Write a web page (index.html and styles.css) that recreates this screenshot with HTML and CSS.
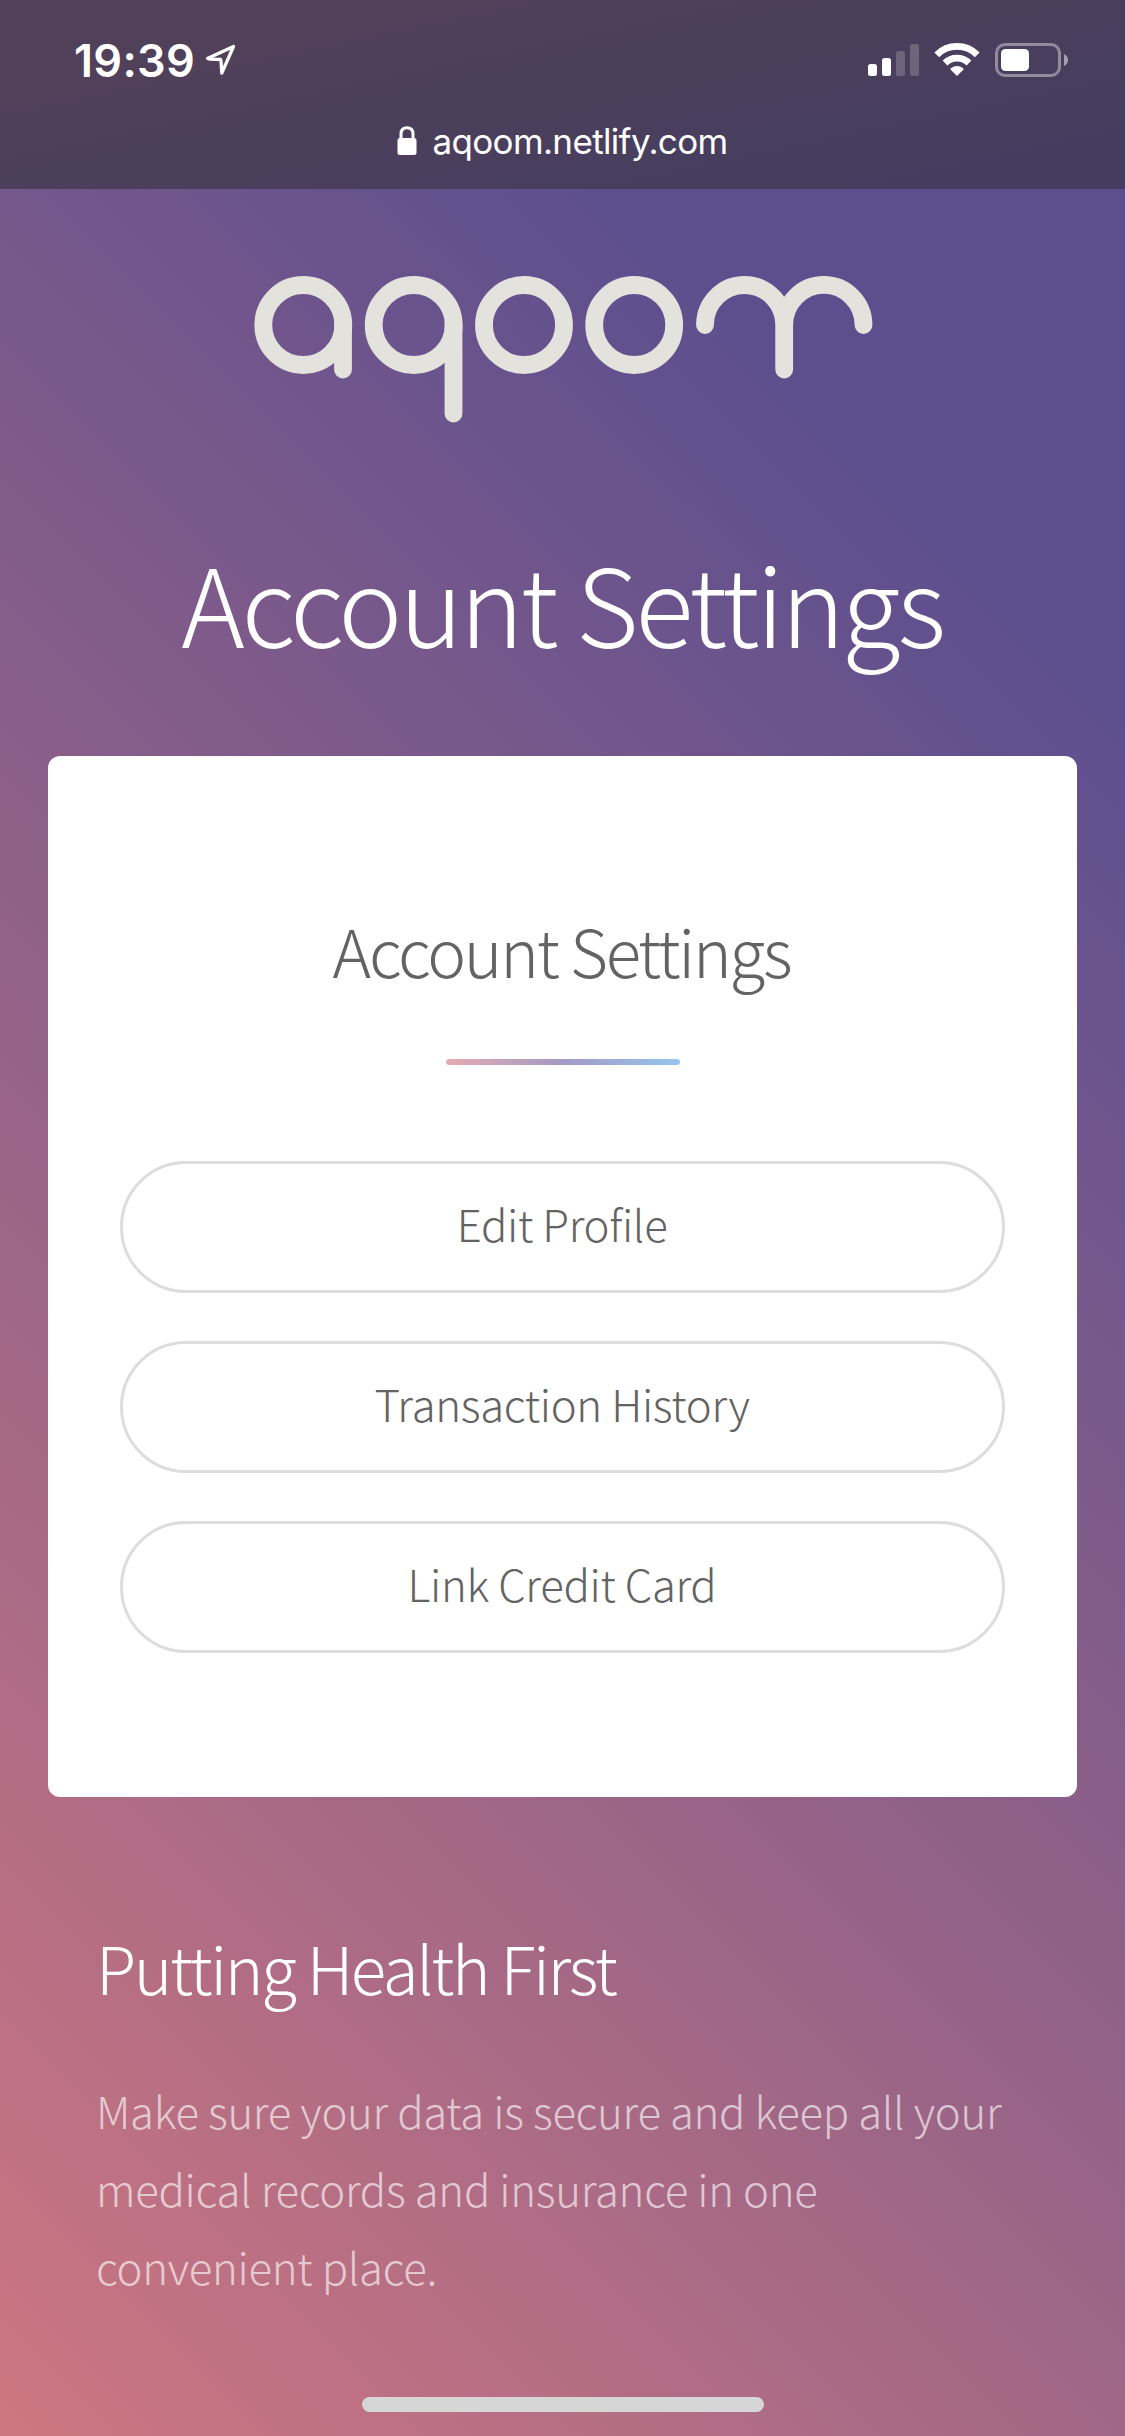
FILE: index.html
```html
<!DOCTYPE html>
<html lang="en">
<head>
<meta charset="utf-8">
<title>Account Settings</title>
<link rel="stylesheet" href="styles.css">
</head>
<body>
<header class="browser-bar">
  <div class="status-row">
    <div class="status-left">
      <span class="clock">19:39</span>
      <svg class="location" viewBox="0 0 32 34" width="32" height="34"><path d="M29.500 3.500 3.500 15.600Q3.500 16.400 16.800 16.500 17 16.500 17.800 30.200Z" fill="none" stroke="#fff" stroke-width="3.300" stroke-linejoin="round"/></svg>
    </div>
    <svg class="indicators" viewBox="0 0 202 38" width="202" height="38">
      <g fill="#fff">
        <rect x="0" y="23" width="9" height="12" rx="2.500"/>
        <rect x="14" y="17" width="9" height="18" rx="2.500"/>
        <rect x="28" y="10" width="9" height="25" rx="2.500" opacity=".2"/>
        <rect x="42" y="3" width="9" height="32" rx="2.500" opacity=".2"/>
        <path d="M89 35 82.700 28.800Q82 28 82.900 27.300Q89 22.700 95.100 27.300Q96 28 95.300 28.800Z"/>
      </g>
      <path d="M77 22A17 17 0 0 1 101 22M68.800 13.800A28.500 28.500 0 0 1 109.200 13.800" fill="none" stroke="#fff" stroke-width="6.800"/>
      <rect x="128.500" y="3.500" width="63" height="31" rx="8.500" fill="none" stroke="#fff" stroke-opacity=".4" stroke-width="3"/>
      <rect x="133" y="8" width="28" height="22" rx="4.500" fill="#fff"/>
      <path d="M196 13Q200 15 200 19T196 25Z" fill="#fff" opacity=".5"/>
    </svg>
  </div>
  <div class="address">
    <svg viewBox="0 0 20 30" width="20" height="30"><rect x=".5" y="12" width="19" height="17" rx="2.500" fill="#fff"/><path d="M4 13V8Q4 1.800 10 1.800T16 8V13" fill="none" stroke="#fff" stroke-width="3"/></svg>
    <span>aqoom.netlify.com</span>
  </div>
</header>
<main class="page">
  <svg class="logo" viewBox="0 0 620 150" width="620" height="150" fill="none" stroke="#e4e2dd" stroke-width="17.800" stroke-linecap="round">
    <circle cx="49.300" cy="49" r="40"/><path d="M89 49V93.500"/>
    <circle cx="159.700" cy="49" r="40"/><path d="M199.500 49V137.500"/>
    <circle cx="270" cy="49" r="40"/>
    <circle cx="380.200" cy="49" r="40"/>
    <path d="M451 49A39.600 40 0 0 1 530.200 49V93.500M530.200 49A39.600 40 0 0 1 609.500 49"/>
  </svg>
  <h1 class="title">Account Settings</h1>
  <section class="card">
    <h2 class="card-title">Account Settings</h2>
    <div class="rule"></div>
    <nav class="actions">
      <a class="button">Edit Profile</a>
      <a class="button">Transaction History</a>
      <a class="button">Link Credit Card</a>
    </nav>
  </section>
  <footer class="footer">
    <h2 class="footer-title">Putting Health First</h2>
    <p class="footer-text">Make sure your data is secure and keep all your medical records and insurance in one convenient place.</p>
  </footer>
  <div class="home-indicator"></div>
</main>
</body>
</html>
```
FILE: styles.css
```css
* { box-sizing: border-box; margin: 0; padding: 0; }

body {
  width: 1125px;
  height: 2436px;
  display: flex;
  flex-direction: column;
  overflow: hidden;
  background: linear-gradient(45deg, #df7d7f -13%, #5d4f8e 80.2%);
  background-size: 1125px 2436px;
  font-family: "Noto Sans CJK JP", "Noto Sans CJK SC", sans-serif;
  font-weight: 200;
  color: #fff;
}

.browser-bar {
  height: 189px;
  flex: none;
  padding-top: 40px;
  background:
    linear-gradient(168deg, #50405a 25%, rgba(80, 64, 90, 0) 90%),
    #443d5f;
  font-family: Inter, sans-serif;
}

.status-row { display: flex; justify-content: space-between; height: 40px; padding: 0 56px 0 74px; }
.status-left { display: flex; gap: 8px; }
.clock { font-size: 45px; line-height: 41px; font-weight: 600; width: 122px; white-space: nowrap; letter-spacing: .3px; }
.location { margin-top: 3px; }
.indicators { margin: 1px -1px 0 0; }

.address { display: flex; justify-content: center; gap: 15px; margin-top: 43px; height: 40px; font-size: 35px; line-height: 37px; font-weight: 400; letter-spacing: -.65px; }
.address svg { margin-top: 3px; }

.page { display: flex; flex-direction: column; align-items: center; flex: 1; }
.logo { margin: 87px 0 0 3px; flex: none; }

.title { margin-top: 98px; height: 155px; padding-right: 1px; font-size: 108px; line-height: 155px; font-weight: 200; letter-spacing: -3.200px; white-space: nowrap; }

.card {
  width: 1029px;
  height: 1041px;
  flex: none;
  margin-top: 77px;
  padding: 144px 72px;
  border-radius: 12px;
  background: #fff;
  color: #636363;
  text-align: center;
}
.card-title { height: 99px; padding-right: 2px; font-size: 65.500px; line-height: 99px; font-weight: 200; letter-spacing: -2.200px; }
.rule { width: 234px; height: 6px; margin: 60px auto 0; border-radius: 3px; background: linear-gradient(90deg, #e6abb1, #a499c5 50%, #95c6ee); }
.actions { display: flex; flex-direction: column; gap: 48px; margin-top: 96px; }
.button { height: 132px; padding-right: 1px; border: 3px solid #ddd; border-radius: 66px; font-size: 43.700px; line-height: 118px; letter-spacing: -.32px; }

.footer { width: 933px; margin-top: 121px; }
.footer-title { height: 98px; font-size: 65.500px; line-height: 98px; font-weight: 200; letter-spacing: -2.300px; }
.footer-text { margin-top: 55px; font-size: 43.700px; line-height: 78px; letter-spacing: -.31px; color: rgba(255, 255, 255, .65); }

.home-indicator { width: 402px; height: 15px; margin: auto 0 24px; border-radius: 8px; background: #d6d6d6; }
```
